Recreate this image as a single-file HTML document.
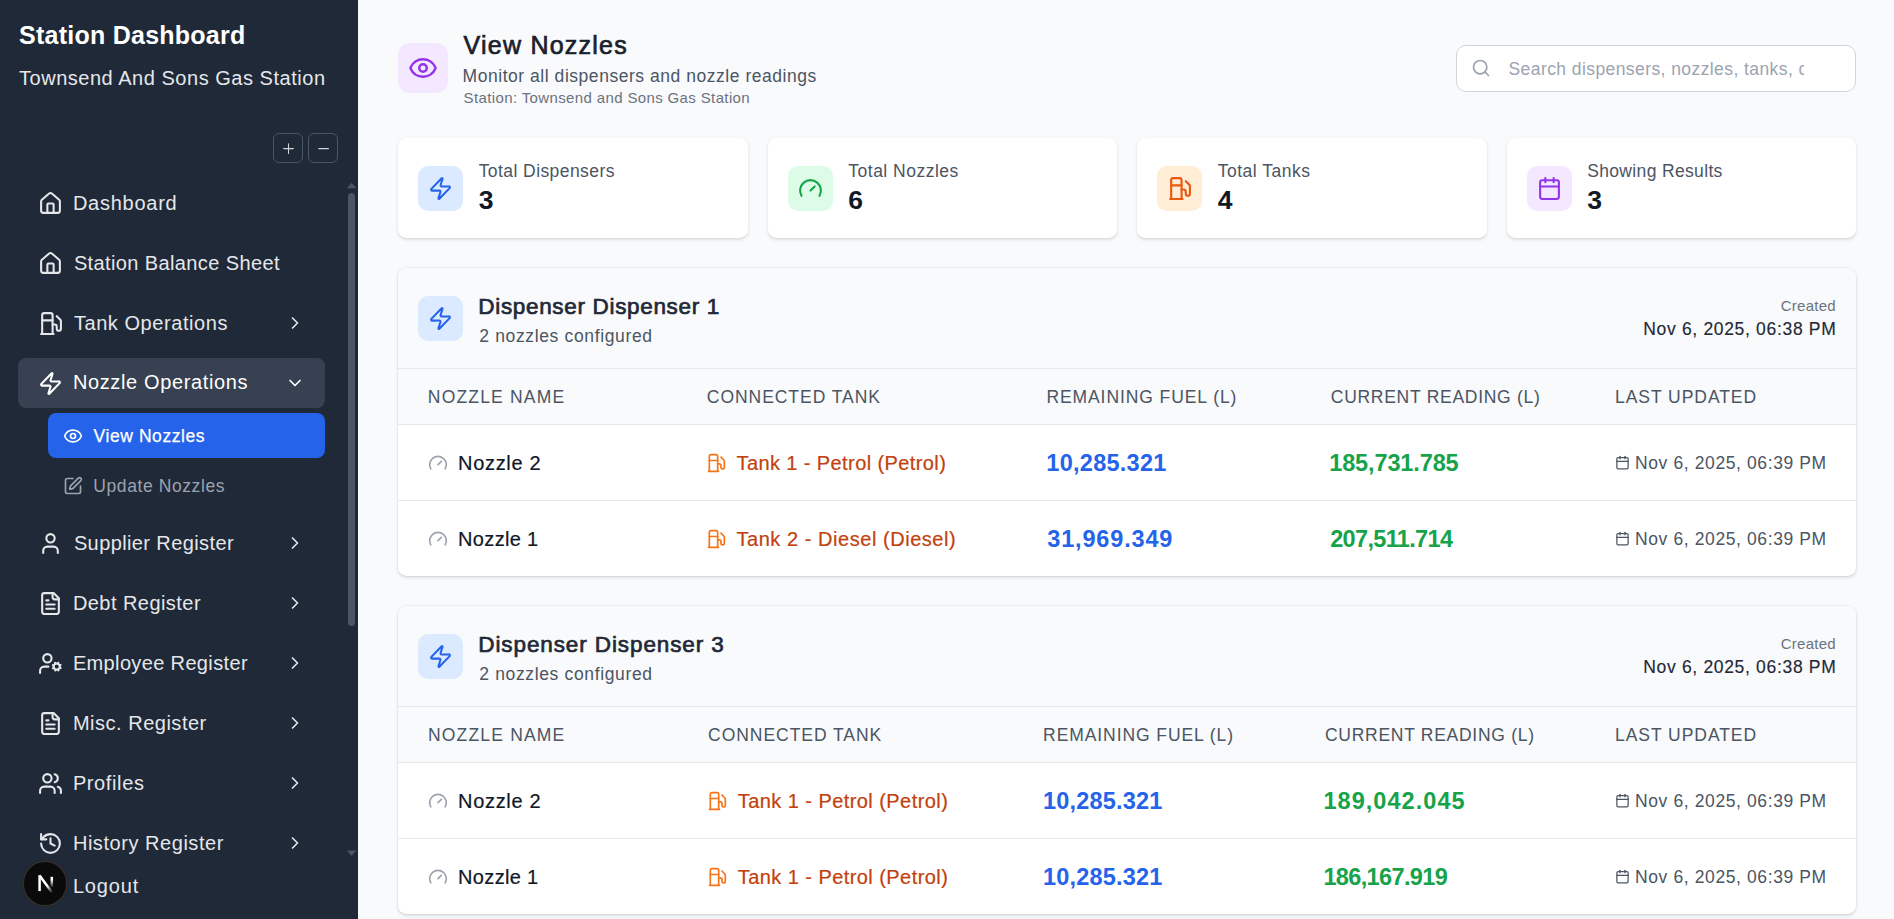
<!DOCTYPE html><html><head><meta charset="utf-8"><title>View Nozzles</title><style>*{margin:0;padding:0}html,body{width:1894px;height:919px;overflow:hidden;background:#f9fafb}
.b{position:absolute}.i{position:absolute;overflow:visible}
.t{position:absolute;white-space:nowrap;font-family:"Liberation Sans",sans-serif}</style></head><body>
<div class="b" style="left:0px;top:0px;width:358px;height:919px;background:#1f2937"></div>
<div class="b" style="left:273px;top:133px;width:30px;height:30px;border:1px solid #4b5563;border-radius:6px;box-sizing:border-box"></div>
<div class="b" style="left:308px;top:133px;width:30px;height:30px;border:1px solid #4b5563;border-radius:6px;box-sizing:border-box"></div>
<svg class="i" style="left:273px;top:133px;width:30px;height:30px" viewBox="0 0 30 30" stroke="#d1d5db" stroke-width="1.05" stroke-linecap="round"><path d="M15.5 10.7v9.8M10.6 15.6h9.8"/></svg>
<svg class="i" style="left:308px;top:133px;width:30px;height:30px" viewBox="0 0 30 30" stroke="#d1d5db" stroke-width="1.05" stroke-linecap="round"><path d="M10.7 15.6h9.8"/></svg>
<svg class="i" style="left:346px;top:181px;width:12px;height:10px" viewBox="0 0 12 10"><path d="M0.8 7.2h9.6L5.6 1.8z" fill="#4b5563"/></svg>
<div class="b" style="left:348px;top:193px;width:7px;height:433px;background:#4b5563;border-radius:4px"></div>
<svg class="i" style="left:346px;top:848px;width:12px;height:10px" viewBox="0 0 12 10"><path d="M0.8 2.6h9.6L5.6 8z" fill="#4b5563"/></svg>
<div class="b" style="left:18px;top:358px;width:307px;height:50px;background:#374151;border-radius:8px"></div>
<div class="b" style="left:48px;top:413px;width:277px;height:45px;background:#2563eb;border-radius:8px"></div>
<svg class="i" style="left:38px;top:190.5px;width:25px;height:25px" viewBox="0 0 24 24" fill="none" stroke="#e5e7eb" stroke-width="2" stroke-linecap="round" stroke-linejoin="round"><path d="M15 21v-8a1 1 0 0 0-1-1h-4a1 1 0 0 0-1 1v8"/><path d="M3 10a2 2 0 0 1 .709-1.528l7-5.999a2 2 0 0 1 2.582 0l7 5.999A2 2 0 0 1 21 10v9a2 2 0 0 1-2 2H5a2 2 0 0 1-2-2z"/></svg>
<svg class="i" style="left:38px;top:250.5px;width:25px;height:25px" viewBox="0 0 24 24" fill="none" stroke="#e5e7eb" stroke-width="2" stroke-linecap="round" stroke-linejoin="round"><path d="M15 21v-8a1 1 0 0 0-1-1h-4a1 1 0 0 0-1 1v8"/><path d="M3 10a2 2 0 0 1 .709-1.528l7-5.999a2 2 0 0 1 2.582 0l7 5.999A2 2 0 0 1 21 10v9a2 2 0 0 1-2 2H5a2 2 0 0 1-2-2z"/></svg>
<svg class="i" style="left:38px;top:310.8px;width:25px;height:25px" viewBox="0 0 24 24" fill="none" stroke="#e5e7eb" stroke-width="2" stroke-linecap="round" stroke-linejoin="round"><line x1="3" x2="15" y1="22" y2="22"/><line x1="4" x2="14" y1="9" y2="9"/><path d="M14 22V4a2 2 0 0 0-2-2H6a2 2 0 0 0-2 2v18"/><path d="M14 13h2a2 2 0 0 1 2 2v2a2 2 0 0 0 2 2a2 2 0 0 0 2-2V9.83a2 2 0 0 0-.59-1.42L18 5"/></svg>
<svg class="i" style="left:285px;top:313.3px;width:20px;height:20px" viewBox="0 0 24 24" fill="none" stroke="#e5e7eb" stroke-width="2" stroke-linecap="round" stroke-linejoin="round"><path d="m9 18 6-6-6-6"/></svg>
<svg class="i" style="left:38px;top:371.1px;width:25px;height:25px" viewBox="0 0 24 24" fill="none" stroke="#ffffff" stroke-width="2" stroke-linecap="round" stroke-linejoin="round"><path d="M4 14a1 1 0 0 1-.78-1.63l9.9-10.2a.5.5 0 0 1 .86.46l-1.92 6.02A1 1 0 0 0 13 10h7a1 1 0 0 1 .78 1.63l-9.9 10.2a.5.5 0 0 1-.86-.46l1.92-6.02A1 1 0 0 0 11 14z"/></svg>
<svg class="i" style="left:285px;top:372.9px;width:20px;height:20px" viewBox="0 0 24 24" fill="none" stroke="#ffffff" stroke-width="2" stroke-linecap="round" stroke-linejoin="round"><path d="m6 9 6 6 6-6"/></svg>
<svg class="i" style="left:38px;top:530.5px;width:25px;height:25px" viewBox="0 0 24 24" fill="none" stroke="#e5e7eb" stroke-width="2" stroke-linecap="round" stroke-linejoin="round"><path d="M19 21v-2a4 4 0 0 0-4-4H9a4 4 0 0 0-4 4v2"/><circle cx="12" cy="7" r="4"/></svg>
<svg class="i" style="left:285px;top:533px;width:20px;height:20px" viewBox="0 0 24 24" fill="none" stroke="#e5e7eb" stroke-width="2" stroke-linecap="round" stroke-linejoin="round"><path d="m9 18 6-6-6-6"/></svg>
<svg class="i" style="left:38px;top:590.5px;width:25px;height:25px" viewBox="0 0 24 24" fill="none" stroke="#e5e7eb" stroke-width="2" stroke-linecap="round" stroke-linejoin="round"><path d="M15 2H6a2 2 0 0 0-2 2v16a2 2 0 0 0 2 2h12a2 2 0 0 0 2-2V7Z"/><path d="M14 2v4a2 2 0 0 0 2 2h4"/><path d="M10 9H8"/><path d="M16 13H8"/><path d="M16 17H8"/></svg>
<svg class="i" style="left:285px;top:593px;width:20px;height:20px" viewBox="0 0 24 24" fill="none" stroke="#e5e7eb" stroke-width="2" stroke-linecap="round" stroke-linejoin="round"><path d="m9 18 6-6-6-6"/></svg>
<svg class="i" style="left:38px;top:650.5px;width:25px;height:25px" viewBox="0 0 24 24" fill="none" stroke="#e5e7eb" stroke-width="2" stroke-linecap="round" stroke-linejoin="round"><circle cx="18" cy="15" r="3"/><circle cx="9" cy="7" r="4"/><path d="M10 15H6a4 4 0 0 0-4 4v2"/><path d="m21.7 16.4-.9-.3"/><path d="m15.2 13.9-.9-.3"/><path d="m16.6 18.7.3-.9"/><path d="m19.1 12.2.3-.9"/><path d="m19.6 18.7-.4-1"/><path d="m16.8 12.3-.4-1"/><path d="m14.3 16.6 1-.4"/><path d="m20.7 13.8 1-.4"/></svg>
<svg class="i" style="left:285px;top:653px;width:20px;height:20px" viewBox="0 0 24 24" fill="none" stroke="#e5e7eb" stroke-width="2" stroke-linecap="round" stroke-linejoin="round"><path d="m9 18 6-6-6-6"/></svg>
<svg class="i" style="left:38px;top:710.5px;width:25px;height:25px" viewBox="0 0 24 24" fill="none" stroke="#e5e7eb" stroke-width="2" stroke-linecap="round" stroke-linejoin="round"><path d="M15 2H6a2 2 0 0 0-2 2v16a2 2 0 0 0 2 2h12a2 2 0 0 0 2-2V7Z"/><path d="M14 2v4a2 2 0 0 0 2 2h4"/><path d="M10 9H8"/><path d="M16 13H8"/><path d="M16 17H8"/></svg>
<svg class="i" style="left:285px;top:713px;width:20px;height:20px" viewBox="0 0 24 24" fill="none" stroke="#e5e7eb" stroke-width="2" stroke-linecap="round" stroke-linejoin="round"><path d="m9 18 6-6-6-6"/></svg>
<svg class="i" style="left:38px;top:770.5px;width:25px;height:25px" viewBox="0 0 24 24" fill="none" stroke="#e5e7eb" stroke-width="2" stroke-linecap="round" stroke-linejoin="round"><path d="M16 21v-2a4 4 0 0 0-4-4H6a4 4 0 0 0-4 4v2"/><circle cx="9" cy="7" r="4"/><path d="M22 21v-2a4 4 0 0 0-3-3.87"/><path d="M16 3.13a4 4 0 0 1 0 7.75"/></svg>
<svg class="i" style="left:285px;top:773px;width:20px;height:20px" viewBox="0 0 24 24" fill="none" stroke="#e5e7eb" stroke-width="2" stroke-linecap="round" stroke-linejoin="round"><path d="m9 18 6-6-6-6"/></svg>
<svg class="i" style="left:38px;top:830.5px;width:25px;height:25px" viewBox="0 0 24 24" fill="none" stroke="#e5e7eb" stroke-width="2" stroke-linecap="round" stroke-linejoin="round"><path d="M3 12a9 9 0 1 0 9-9 9.75 9.75 0 0 0-6.74 2.74L3 8"/><path d="M3 3v5h5"/><path d="M12 7v5l4 2"/></svg>
<svg class="i" style="left:285px;top:833px;width:20px;height:20px" viewBox="0 0 24 24" fill="none" stroke="#e5e7eb" stroke-width="2" stroke-linecap="round" stroke-linejoin="round"><path d="m9 18 6-6-6-6"/></svg>
<svg class="i" style="left:62.9px;top:426.2px;width:20px;height:20px" viewBox="0 0 24 24" fill="none" stroke="#ffffff" stroke-width="2" stroke-linecap="round" stroke-linejoin="round"><path d="M2.062 12.348a1 1 0 0 1 0-.696 10.75 10.75 0 0 1 19.876 0 1 1 0 0 1 0 .696 10.75 10.75 0 0 1-19.876 0"/><circle cx="12" cy="12" r="3"/></svg>
<svg class="i" style="left:63px;top:475.9px;width:20px;height:20px" viewBox="0 0 24 24" fill="none" stroke="#9ca3af" stroke-width="2" stroke-linecap="round" stroke-linejoin="round"><path d="M12 3H5a2 2 0 0 0-2 2v14a2 2 0 0 0 2 2h14a2 2 0 0 0 2-2v-7"/><path d="M18.375 2.625a1 1 0 0 1 3 3l-9.013 9.014a2 2 0 0 1-.853.505l-2.873.84a.5.5 0 0 1-.62-.62l.84-2.873a2 2 0 0 1 .506-.852z"/></svg>
<div class="b" style="left:22.4px;top:860px;width:46px;height:46.5px;border-radius:50%;background:#0a0a0a;box-shadow:0 0 0 2px #2f2f2f inset"></div>
<svg class="i" style="left:22.4px;top:860px;width:46px;height:46px" viewBox="0 0 46 46"><defs><linearGradient id="ng1" gradientUnits="userSpaceOnUse" x1="0" y1="16" x2="0" y2="28"><stop offset="0" stop-color="#fff"/><stop offset="0.3" stop-color="#fff"/><stop offset="1" stop-color="#fff" stop-opacity="0"/></linearGradient><linearGradient id="ng2" gradientUnits="userSpaceOnUse" x1="17" y1="15" x2="30" y2="33"><stop offset="0.6" stop-color="#fff"/><stop offset="1" stop-color="#fff" stop-opacity="0"/></linearGradient></defs><path d="M17.6 15.2v15.9" stroke="#fff" stroke-width="2.5"/><path d="M17.6 15.6L30.4 33" stroke="url(#ng2)" stroke-width="2.5"/><path d="M29.8 16.8v10" stroke="url(#ng1)" stroke-width="2.5"/></svg>
<div class="b" style="left:358px;top:0px;width:1536px;height:919px;background:#f9fafb"></div>
<div class="b" style="left:398px;top:43px;width:50px;height:50px;background:#f3e8ff;border-radius:12px"></div>
<svg class="i" style="left:408.1px;top:52.9px;width:30px;height:30px" viewBox="0 0 24 24" fill="none" stroke="#9333ea" stroke-width="2" stroke-linecap="round" stroke-linejoin="round"><path d="M2.062 12.348a1 1 0 0 1 0-.696 10.75 10.75 0 0 1 19.876 0 1 1 0 0 1 0 .696 10.75 10.75 0 0 1-19.876 0"/><circle cx="12" cy="12" r="3"/></svg>
<div class="b" style="left:1456px;top:45px;width:400px;height:47px;background:#ffffff;border:1px solid #d1d5db;border-radius:10px;box-sizing:border-box"></div>
<svg class="i" style="left:1471px;top:58.4px;width:20px;height:20px" viewBox="0 0 24 24" fill="none" stroke="#9ca3af" stroke-width="2" stroke-linecap="round" stroke-linejoin="round"><circle cx="11" cy="11" r="8"/><path d="m21 21-4.3-4.3"/></svg>
<div class="b" style="left:398px;top:138px;width:350px;height:100px;background:#fff;border-radius:8.5px;box-shadow:0 1.25px 3.75px rgba(0,0,0,0.1),0 1.25px 2.5px -1.25px rgba(0,0,0,0.1)"></div>
<div class="b" style="left:418px;top:166px;width:45px;height:45px;background:#dbeafe;border-radius:10px"></div>
<svg class="i" style="left:428px;top:176px;width:25px;height:25px" viewBox="0 0 24 24" fill="none" stroke="#2563eb" stroke-width="2" stroke-linecap="round" stroke-linejoin="round"><path d="M4 14a1 1 0 0 1-.78-1.63l9.9-10.2a.5.5 0 0 1 .86.46l-1.92 6.02A1 1 0 0 0 13 10h7a1 1 0 0 1 .78 1.63l-9.9 10.2a.5.5 0 0 1-.86-.46l1.92-6.02A1 1 0 0 0 11 14z"/></svg>
<div class="b" style="left:768px;top:138px;width:349px;height:100px;background:#fff;border-radius:8.5px;box-shadow:0 1.25px 3.75px rgba(0,0,0,0.1),0 1.25px 2.5px -1.25px rgba(0,0,0,0.1)"></div>
<div class="b" style="left:788px;top:166px;width:45px;height:45px;background:#dcfce7;border-radius:10px"></div>
<svg class="i" style="left:798px;top:176px;width:25px;height:25px" viewBox="0 0 24 24" fill="none" stroke="#16a34a" stroke-width="2" stroke-linecap="round" stroke-linejoin="round"><path d="m12 14 4-4"/><path d="M3.34 19a10 10 0 1 1 17.32 0"/></svg>
<div class="b" style="left:1137px;top:138px;width:350px;height:100px;background:#fff;border-radius:8.5px;box-shadow:0 1.25px 3.75px rgba(0,0,0,0.1),0 1.25px 2.5px -1.25px rgba(0,0,0,0.1)"></div>
<div class="b" style="left:1157px;top:166px;width:45px;height:45px;background:#ffedd5;border-radius:10px"></div>
<svg class="i" style="left:1167px;top:176px;width:25px;height:25px" viewBox="0 0 24 24" fill="none" stroke="#ea580c" stroke-width="2" stroke-linecap="round" stroke-linejoin="round"><line x1="3" x2="15" y1="22" y2="22"/><line x1="4" x2="14" y1="9" y2="9"/><path d="M14 22V4a2 2 0 0 0-2-2H6a2 2 0 0 0-2 2v18"/><path d="M14 13h2a2 2 0 0 1 2 2v2a2 2 0 0 0 2 2a2 2 0 0 0 2-2V9.83a2 2 0 0 0-.59-1.42L18 5"/></svg>
<div class="b" style="left:1507px;top:138px;width:349px;height:100px;background:#fff;border-radius:8.5px;box-shadow:0 1.25px 3.75px rgba(0,0,0,0.1),0 1.25px 2.5px -1.25px rgba(0,0,0,0.1)"></div>
<div class="b" style="left:1527px;top:166px;width:45px;height:45px;background:#f3e8ff;border-radius:10px"></div>
<svg class="i" style="left:1537px;top:176px;width:25px;height:25px" viewBox="0 0 24 24" fill="none" stroke="#9333ea" stroke-width="2" stroke-linecap="round" stroke-linejoin="round"><path d="M8 2v4"/><path d="M16 2v4"/><rect width="18" height="18" x="3" y="4" rx="2"/><path d="M3 10h18"/></svg>
<div class="b" style="left:398px;top:268px;width:1458px;height:308px;background:#fff;border-radius:8.5px;box-shadow:0 1.25px 3.75px rgba(0,0,0,0.1),0 1.25px 2.5px -1.25px rgba(0,0,0,0.1),0 0 0 1px rgba(0,0,0,0.025)"></div>
<div class="b" style="left:398px;top:268px;width:1458px;height:100px;background:#f9fafb;border-radius:8.5px 8.5px 0 0"></div>
<div class="b" style="left:398px;top:368px;width:1458px;height:1px;background:#e5e7eb"></div>
<div class="b" style="left:398px;top:369px;width:1458px;height:55px;background:#f9fafb"></div>
<div class="b" style="left:398px;top:424px;width:1458px;height:1px;background:#e5e7eb"></div>
<div class="b" style="left:398px;top:500px;width:1458px;height:1px;background:#e5e7eb"></div>
<div class="b" style="left:418px;top:296px;width:45px;height:45px;background:#dbeafe;border-radius:10px"></div>
<svg class="i" style="left:428px;top:306px;width:25px;height:25px" viewBox="0 0 24 24" fill="none" stroke="#2563eb" stroke-width="2" stroke-linecap="round" stroke-linejoin="round"><path d="M4 14a1 1 0 0 1-.78-1.63l9.9-10.2a.5.5 0 0 1 .86.46l-1.92 6.02A1 1 0 0 0 13 10h7a1 1 0 0 1 .78 1.63l-9.9 10.2a.5.5 0 0 1-.86-.46l1.92-6.02A1 1 0 0 0 11 14z"/></svg>
<svg class="i" style="left:427.9px;top:453.1px;width:20px;height:20px" viewBox="0 0 24 24" fill="none" stroke="#9ca3af" stroke-width="2" stroke-linecap="round" stroke-linejoin="round"><path d="m12 14 4-4"/><path d="M3.34 19a10 10 0 1 1 17.32 0"/></svg>
<svg class="i" style="left:706px;top:453px;width:20px;height:20px" viewBox="0 0 24 24" fill="none" stroke="#f97316" stroke-width="2" stroke-linecap="round" stroke-linejoin="round"><line x1="3" x2="15" y1="22" y2="22"/><line x1="4" x2="14" y1="9" y2="9"/><path d="M14 22V4a2 2 0 0 0-2-2H6a2 2 0 0 0-2 2v18"/><path d="M14 13h2a2 2 0 0 1 2 2v2a2 2 0 0 0 2 2a2 2 0 0 0 2-2V9.83a2 2 0 0 0-.59-1.42L18 5"/></svg>
<svg class="i" style="left:1615px;top:454.8px;width:15px;height:15px" viewBox="0 0 24 24" fill="none" stroke="#4b5563" stroke-width="2" stroke-linecap="round" stroke-linejoin="round"><path d="M8 2v4"/><path d="M16 2v4"/><rect width="18" height="18" x="3" y="4" rx="2"/><path d="M3 10h18"/></svg>
<svg class="i" style="left:427.9px;top:529.1px;width:20px;height:20px" viewBox="0 0 24 24" fill="none" stroke="#9ca3af" stroke-width="2" stroke-linecap="round" stroke-linejoin="round"><path d="m12 14 4-4"/><path d="M3.34 19a10 10 0 1 1 17.32 0"/></svg>
<svg class="i" style="left:706px;top:529px;width:20px;height:20px" viewBox="0 0 24 24" fill="none" stroke="#f97316" stroke-width="2" stroke-linecap="round" stroke-linejoin="round"><line x1="3" x2="15" y1="22" y2="22"/><line x1="4" x2="14" y1="9" y2="9"/><path d="M14 22V4a2 2 0 0 0-2-2H6a2 2 0 0 0-2 2v18"/><path d="M14 13h2a2 2 0 0 1 2 2v2a2 2 0 0 0 2 2a2 2 0 0 0 2-2V9.83a2 2 0 0 0-.59-1.42L18 5"/></svg>
<svg class="i" style="left:1615px;top:530.8px;width:15px;height:15px" viewBox="0 0 24 24" fill="none" stroke="#4b5563" stroke-width="2" stroke-linecap="round" stroke-linejoin="round"><path d="M8 2v4"/><path d="M16 2v4"/><rect width="18" height="18" x="3" y="4" rx="2"/><path d="M3 10h18"/></svg>
<div class="b" style="left:398px;top:606px;width:1458px;height:308px;background:#fff;border-radius:8.5px;box-shadow:0 1.25px 3.75px rgba(0,0,0,0.1),0 1.25px 2.5px -1.25px rgba(0,0,0,0.1),0 0 0 1px rgba(0,0,0,0.025)"></div>
<div class="b" style="left:398px;top:606px;width:1458px;height:100px;background:#f9fafb;border-radius:8.5px 8.5px 0 0"></div>
<div class="b" style="left:398px;top:706px;width:1458px;height:1px;background:#e5e7eb"></div>
<div class="b" style="left:398px;top:707px;width:1458px;height:55px;background:#f9fafb"></div>
<div class="b" style="left:398px;top:762px;width:1458px;height:1px;background:#e5e7eb"></div>
<div class="b" style="left:398px;top:838px;width:1458px;height:1px;background:#e5e7eb"></div>
<div class="b" style="left:418px;top:634px;width:45px;height:45px;background:#dbeafe;border-radius:10px"></div>
<svg class="i" style="left:428px;top:644px;width:25px;height:25px" viewBox="0 0 24 24" fill="none" stroke="#2563eb" stroke-width="2" stroke-linecap="round" stroke-linejoin="round"><path d="M4 14a1 1 0 0 1-.78-1.63l9.9-10.2a.5.5 0 0 1 .86.46l-1.92 6.02A1 1 0 0 0 13 10h7a1 1 0 0 1 .78 1.63l-9.9 10.2a.5.5 0 0 1-.86-.46l1.92-6.02A1 1 0 0 0 11 14z"/></svg>
<svg class="i" style="left:427.9px;top:791.1px;width:20px;height:20px" viewBox="0 0 24 24" fill="none" stroke="#9ca3af" stroke-width="2" stroke-linecap="round" stroke-linejoin="round"><path d="m12 14 4-4"/><path d="M3.34 19a10 10 0 1 1 17.32 0"/></svg>
<svg class="i" style="left:707.3px;top:791px;width:20px;height:20px" viewBox="0 0 24 24" fill="none" stroke="#f97316" stroke-width="2" stroke-linecap="round" stroke-linejoin="round"><line x1="3" x2="15" y1="22" y2="22"/><line x1="4" x2="14" y1="9" y2="9"/><path d="M14 22V4a2 2 0 0 0-2-2H6a2 2 0 0 0-2 2v18"/><path d="M14 13h2a2 2 0 0 1 2 2v2a2 2 0 0 0 2 2a2 2 0 0 0 2-2V9.83a2 2 0 0 0-.59-1.42L18 5"/></svg>
<svg class="i" style="left:1615px;top:792.8px;width:15px;height:15px" viewBox="0 0 24 24" fill="none" stroke="#4b5563" stroke-width="2" stroke-linecap="round" stroke-linejoin="round"><path d="M8 2v4"/><path d="M16 2v4"/><rect width="18" height="18" x="3" y="4" rx="2"/><path d="M3 10h18"/></svg>
<svg class="i" style="left:427.9px;top:867.1px;width:20px;height:20px" viewBox="0 0 24 24" fill="none" stroke="#9ca3af" stroke-width="2" stroke-linecap="round" stroke-linejoin="round"><path d="m12 14 4-4"/><path d="M3.34 19a10 10 0 1 1 17.32 0"/></svg>
<svg class="i" style="left:707.3px;top:867px;width:20px;height:20px" viewBox="0 0 24 24" fill="none" stroke="#f97316" stroke-width="2" stroke-linecap="round" stroke-linejoin="round"><line x1="3" x2="15" y1="22" y2="22"/><line x1="4" x2="14" y1="9" y2="9"/><path d="M14 22V4a2 2 0 0 0-2-2H6a2 2 0 0 0-2 2v18"/><path d="M14 13h2a2 2 0 0 1 2 2v2a2 2 0 0 0 2 2a2 2 0 0 0 2-2V9.83a2 2 0 0 0-.59-1.42L18 5"/></svg>
<svg class="i" style="left:1615px;top:868.8px;width:15px;height:15px" viewBox="0 0 24 24" fill="none" stroke="#4b5563" stroke-width="2" stroke-linecap="round" stroke-linejoin="round"><path d="M8 2v4"/><path d="M16 2v4"/><rect width="18" height="18" x="3" y="4" rx="2"/><path d="M3 10h18"/></svg>
<span class="t" style="left:19.00px;top:23.14px;font-size:25px;line-height:25px;font-weight:700;color:#ffffff;letter-spacing:0.252px">Station Dashboard</span>
<span class="t" style="left:19.00px;top:68.47px;font-size:20px;line-height:20px;font-weight:400;color:#e5e7eb;letter-spacing:0.526px">Townsend And Sons Gas Station</span>
<span class="t" style="left:72.90px;top:192.57px;font-size:20px;line-height:20px;font-weight:400;color:#e5e7eb;letter-spacing:0.748px">Dashboard</span>
<span class="t" style="left:73.90px;top:252.57px;font-size:20px;line-height:20px;font-weight:400;color:#e5e7eb;letter-spacing:0.382px">Station Balance Sheet</span>
<span class="t" style="left:73.90px;top:312.57px;font-size:20px;line-height:20px;font-weight:400;color:#e5e7eb;letter-spacing:0.562px">Tank Operations</span>
<span class="t" style="left:72.90px;top:372.37px;font-size:20px;line-height:20px;font-weight:400;color:#ffffff;letter-spacing:0.636px">Nozzle Operations</span>
<span class="t" style="left:73.90px;top:532.57px;font-size:20px;line-height:20px;font-weight:400;color:#e5e7eb;letter-spacing:0.391px">Supplier Register</span>
<span class="t" style="left:72.90px;top:592.57px;font-size:20px;line-height:20px;font-weight:400;color:#e5e7eb;letter-spacing:0.449px">Debt Register</span>
<span class="t" style="left:72.90px;top:652.57px;font-size:20px;line-height:20px;font-weight:400;color:#e5e7eb;letter-spacing:0.356px">Employee Register</span>
<span class="t" style="left:72.90px;top:712.57px;font-size:20px;line-height:20px;font-weight:400;color:#e5e7eb;letter-spacing:0.513px">Misc. Register</span>
<span class="t" style="left:72.90px;top:772.57px;font-size:20px;line-height:20px;font-weight:400;color:#e5e7eb;letter-spacing:0.616px">Profiles</span>
<span class="t" style="left:72.90px;top:833.07px;font-size:20px;line-height:20px;font-weight:400;color:#e5e7eb;letter-spacing:0.547px">History Register</span>
<span class="t" style="left:72.90px;top:875.77px;font-size:20px;line-height:20px;font-weight:400;color:#e5e7eb;letter-spacing:0.837px">Logout</span>
<span class="t" style="left:93.60px;top:428.19px;font-size:17.5px;line-height:17.5px;font-weight:400;color:#ffffff;letter-spacing:0.567px;-webkit-text-stroke:0.25px #ffffff">View Nozzles</span>
<span class="t" style="left:93.30px;top:478.19px;font-size:17.5px;line-height:17.5px;font-weight:400;color:#9ca3af;letter-spacing:0.586px">Update Nozzles</span>
<span class="t" style="left:463.60px;top:32.94px;font-size:25px;line-height:25px;font-weight:400;color:#1a202c;letter-spacing:1.228px;-webkit-text-stroke:0.7px #1a202c">View Nozzles</span>
<span class="t" style="left:462.60px;top:68.19px;font-size:17.5px;line-height:17.5px;font-weight:400;color:#4b5563;letter-spacing:0.537px">Monitor all dispensers and nozzle readings</span>
<span class="t" style="left:463.60px;top:90.10px;font-size:15px;line-height:15px;font-weight:400;color:#6b7280;letter-spacing:0.369px">Station: Townsend and Sons Gas Station</span>
<span class="t" style="left:478.70px;top:163.09px;font-size:17.5px;line-height:17.5px;font-weight:400;color:#4b5563;letter-spacing:0.426px">Total Dispensers</span>
<span class="t" style="left:478.70px;top:186.67px;font-size:26.5px;line-height:26.5px;font-weight:700;color:#111827;letter-spacing:0.000px">3</span>
<span class="t" style="left:848.30px;top:163.09px;font-size:17.5px;line-height:17.5px;font-weight:400;color:#4b5563;letter-spacing:0.498px">Total Nozzles</span>
<span class="t" style="left:848.30px;top:186.67px;font-size:26.5px;line-height:26.5px;font-weight:700;color:#111827;letter-spacing:0.000px">6</span>
<span class="t" style="left:1217.80px;top:163.09px;font-size:17.5px;line-height:17.5px;font-weight:400;color:#4b5563;letter-spacing:0.491px">Total Tanks</span>
<span class="t" style="left:1217.80px;top:186.67px;font-size:26.5px;line-height:26.5px;font-weight:700;color:#111827;letter-spacing:0.000px">4</span>
<span class="t" style="left:1587.20px;top:163.09px;font-size:17.5px;line-height:17.5px;font-weight:400;color:#4b5563;letter-spacing:0.343px">Showing Results</span>
<span class="t" style="left:1587.20px;top:186.67px;font-size:26.5px;line-height:26.5px;font-weight:700;color:#111827;letter-spacing:0.000px">3</span>
<span class="t" style="left:478.30px;top:295.85px;font-size:22.5px;line-height:22.5px;font-weight:400;color:#1f2937;letter-spacing:0.670px;-webkit-text-stroke:0.7px #1f2937">Dispenser Dispenser 1</span>
<span class="t" style="left:479.30px;top:328.09px;font-size:17.5px;line-height:17.5px;font-weight:400;color:#4b5563;letter-spacing:0.643px">2 nozzles configured</span>
<span class="t" style="left:1780.80px;top:298.40px;font-size:15px;line-height:15px;font-weight:400;color:#6b7280;letter-spacing:0.230px">Created</span>
<span class="t" style="left:1643.20px;top:320.89px;font-size:17.5px;line-height:17.5px;font-weight:400;color:#1f2937;letter-spacing:0.679px;-webkit-text-stroke:0.15px #1f2937">Nov 6, 2025, 06:38 PM</span>
<span class="t" style="left:427.80px;top:389.19px;font-size:17.5px;line-height:17.5px;font-weight:400;color:#4b5563;letter-spacing:1.192px">NOZZLE NAME</span>
<span class="t" style="left:706.80px;top:389.19px;font-size:17.5px;line-height:17.5px;font-weight:400;color:#4b5563;letter-spacing:0.954px">CONNECTED TANK</span>
<span class="t" style="left:1046.40px;top:389.19px;font-size:17.5px;line-height:17.5px;font-weight:400;color:#4b5563;letter-spacing:0.918px">REMAINING FUEL (L)</span>
<span class="t" style="left:1330.80px;top:389.19px;font-size:17.5px;line-height:17.5px;font-weight:400;color:#4b5563;letter-spacing:0.718px">CURRENT READING (L)</span>
<span class="t" style="left:1615.00px;top:389.19px;font-size:17.5px;line-height:17.5px;font-weight:400;color:#4b5563;letter-spacing:0.953px">LAST UPDATED</span>
<span class="t" style="left:458.10px;top:452.77px;font-size:20px;line-height:20px;font-weight:400;color:#111827;letter-spacing:0.659px;-webkit-text-stroke:0.2px #111827">Nozzle 2</span>
<span class="t" style="left:736.50px;top:452.97px;font-size:20px;line-height:20px;font-weight:400;color:#c2410c;letter-spacing:0.404px;-webkit-text-stroke:0.2px #c2410c">Tank 1 - Petrol (Petrol)</span>
<span class="t" style="left:1046.30px;top:452.41px;font-size:23.5px;line-height:23.5px;font-weight:700;color:#2563eb;letter-spacing:0.273px">10,285.321</span>
<span class="t" style="left:1329.20px;top:452.41px;font-size:23.5px;line-height:23.5px;font-weight:700;color:#16a34a;letter-spacing:-0.121px">185,731.785</span>
<span class="t" style="left:1635.00px;top:455.19px;font-size:17.5px;line-height:17.5px;font-weight:400;color:#4b5563;letter-spacing:0.609px">Nov 6, 2025, 06:39 PM</span>
<span class="t" style="left:458.10px;top:528.77px;font-size:20px;line-height:20px;font-weight:400;color:#111827;letter-spacing:0.330px;-webkit-text-stroke:0.2px #111827">Nozzle 1</span>
<span class="t" style="left:736.50px;top:528.97px;font-size:20px;line-height:20px;font-weight:400;color:#c2410c;letter-spacing:0.541px;-webkit-text-stroke:0.2px #c2410c">Tank 2 - Diesel (Diesel)</span>
<span class="t" style="left:1047.30px;top:528.41px;font-size:23.5px;line-height:23.5px;font-weight:700;color:#2563eb;letter-spacing:0.828px">31,969.349</span>
<span class="t" style="left:1330.20px;top:528.41px;font-size:23.5px;line-height:23.5px;font-weight:700;color:#16a34a;letter-spacing:-0.662px">207,511.714</span>
<span class="t" style="left:1635.00px;top:531.19px;font-size:17.5px;line-height:17.5px;font-weight:400;color:#4b5563;letter-spacing:0.609px">Nov 6, 2025, 06:39 PM</span>
<span class="t" style="left:478.30px;top:633.85px;font-size:22.5px;line-height:22.5px;font-weight:400;color:#1f2937;letter-spacing:0.895px;-webkit-text-stroke:0.7px #1f2937">Dispenser Dispenser 3</span>
<span class="t" style="left:479.30px;top:666.09px;font-size:17.5px;line-height:17.5px;font-weight:400;color:#4b5563;letter-spacing:0.643px">2 nozzles configured</span>
<span class="t" style="left:1780.80px;top:636.40px;font-size:15px;line-height:15px;font-weight:400;color:#6b7280;letter-spacing:0.230px">Created</span>
<span class="t" style="left:1643.20px;top:658.89px;font-size:17.5px;line-height:17.5px;font-weight:400;color:#1f2937;letter-spacing:0.679px;-webkit-text-stroke:0.15px #1f2937">Nov 6, 2025, 06:38 PM</span>
<span class="t" style="left:427.90px;top:727.19px;font-size:17.5px;line-height:17.5px;font-weight:400;color:#4b5563;letter-spacing:1.192px">NOZZLE NAME</span>
<span class="t" style="left:708.10px;top:727.19px;font-size:17.5px;line-height:17.5px;font-weight:400;color:#4b5563;letter-spacing:0.954px">CONNECTED TANK</span>
<span class="t" style="left:1043.10px;top:727.19px;font-size:17.5px;line-height:17.5px;font-weight:400;color:#4b5563;letter-spacing:0.918px">REMAINING FUEL (L)</span>
<span class="t" style="left:1325.00px;top:727.19px;font-size:17.5px;line-height:17.5px;font-weight:400;color:#4b5563;letter-spacing:0.718px">CURRENT READING (L)</span>
<span class="t" style="left:1615.00px;top:727.19px;font-size:17.5px;line-height:17.5px;font-weight:400;color:#4b5563;letter-spacing:0.953px">LAST UPDATED</span>
<span class="t" style="left:458.10px;top:790.77px;font-size:20px;line-height:20px;font-weight:400;color:#111827;letter-spacing:0.659px;-webkit-text-stroke:0.2px #111827">Nozzle 2</span>
<span class="t" style="left:737.80px;top:790.97px;font-size:20px;line-height:20px;font-weight:400;color:#c2410c;letter-spacing:0.434px;-webkit-text-stroke:0.2px #c2410c">Tank 1 - Petrol (Petrol)</span>
<span class="t" style="left:1043.00px;top:790.41px;font-size:23.5px;line-height:23.5px;font-weight:700;color:#2563eb;letter-spacing:0.195px">10,285.321</span>
<span class="t" style="left:1323.40px;top:790.41px;font-size:23.5px;line-height:23.5px;font-weight:700;color:#16a34a;letter-spacing:1.059px">189,042.045</span>
<span class="t" style="left:1635.00px;top:793.19px;font-size:17.5px;line-height:17.5px;font-weight:400;color:#4b5563;letter-spacing:0.609px">Nov 6, 2025, 06:39 PM</span>
<span class="t" style="left:458.10px;top:866.77px;font-size:20px;line-height:20px;font-weight:400;color:#111827;letter-spacing:0.330px;-webkit-text-stroke:0.2px #111827">Nozzle 1</span>
<span class="t" style="left:737.80px;top:866.97px;font-size:20px;line-height:20px;font-weight:400;color:#c2410c;letter-spacing:0.434px;-webkit-text-stroke:0.2px #c2410c">Tank 1 - Petrol (Petrol)</span>
<span class="t" style="left:1043.00px;top:866.41px;font-size:23.5px;line-height:23.5px;font-weight:700;color:#2563eb;letter-spacing:0.195px">10,285.321</span>
<span class="t" style="left:1323.40px;top:866.41px;font-size:23.5px;line-height:23.5px;font-weight:700;color:#16a34a;letter-spacing:-0.631px">186,167.919</span>
<span class="t" style="left:1635.00px;top:869.19px;font-size:17.5px;line-height:17.5px;font-weight:400;color:#4b5563;letter-spacing:0.609px">Nov 6, 2025, 06:39 PM</span>
<span class="t" style="left:1508.50px;top:61.39px;font-size:17.5px;line-height:17.5px;font-weight:400;color:#9ca3af;letter-spacing:0.421px;width:295.50px;overflow:hidden">Search dispensers, nozzles, tanks, c</span>
</body></html>
